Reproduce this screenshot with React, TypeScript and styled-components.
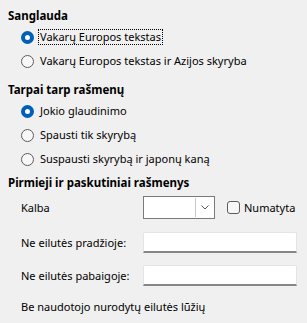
import styled, { createGlobalStyle } from 'styled-components';

const GlobalStyle = createGlobalStyle`
  html, body {
    margin: 0;
    padding: 0;
    background: #f0f0f0;
  }
  body {
    font-family: 'Noto Sans', 'Open Sans', sans-serif;
    font-size: 11px;
    color: #000;
  }
`;

const Page = styled.div`
  width: 307px;
  height: 323px;
  box-sizing: border-box;
  padding: 6px 9px 0 8px;
  display: flex;
  flex-direction: column;
`;

const Section = styled.section<{ $gap?: number }>`
  display: flex;
  flex-direction: column;
  margin-top: ${(p) => p.$gap ?? 0}px;
`;

const Heading = styled.div`
  font-weight: 700;
  font-size: 11.5px;
  height: 19px;
  line-height: 19px;
`;

const Options = styled.div`
  display: flex;
  flex-direction: column;
  padding-left: 13px;
`;

const OptionRow = styled.label`
  display: flex;
  align-items: center;
  gap: 4px;
  height: 24px;
`;

const RadioDot = styled.span<{ $on?: boolean }>`
  box-sizing: border-box;
  width: 13px;
  height: 13px;
  border-radius: 50%;
  flex: none;
  background: ${(p) => (p.$on ? '#ffffff' : '#f7f7f7')};
  border: ${(p) => (p.$on ? '4px solid #005fb8' : '1px solid #5c5c5c')};
`;

const OptionText = styled.span<{ $focus?: boolean }>`
  line-height: 14px;
  padding: 0 1px;
  border: 1px dotted ${(p) => (p.$focus ? '#000' : 'transparent')};
`;

const FormRow = styled.div<{ $h: number; $gap: number }>`
  display: flex;
  align-items: center;
  height: ${(p) => p.$h}px;
  margin-top: ${(p) => p.$gap}px;
  padding-left: 13px;
`;

const FieldLabel = styled.span`
  width: 122px;
  flex: none;
`;

const Combo = styled.div`
  box-sizing: border-box;
  width: 72px;
  height: 23px;
  border: 1px solid #7a7a7a;
  background: #fff;
  display: flex;
  justify-content: flex-end;
  padding: 1px;
`;

const ComboButton = styled.div`
  box-sizing: border-box;
  width: 18px;
  height: 100%;
  border-left: 1px solid #c8c8c8;
  display: flex;
  align-items: center;
  justify-content: center;
`;

const Check = styled.span`
  box-sizing: border-box;
  width: 13px;
  height: 13px;
  border: 1px solid #5c5c5c;
  border-radius: 3px;
  background: #f7f7f7;
  margin-left: 12px;
  margin-right: 4px;
`;

const TextBox = styled.div`
  box-sizing: border-box;
  width: 154px;
  height: 21px;
  background: #fff;
  border: 1px solid #e4e4e4;
  border-bottom: 2px solid #868686;
  border-radius: 2px 2px 0 0;
`;

const Note = styled.div`
  padding-left: 13px;
  margin-top: 11px;
  height: 20px;
  line-height: 20px;
`;

function Radio({ label, on, focus }: { label: string; on?: boolean; focus?: boolean }) {
  return (
    <OptionRow>
      <RadioDot $on={on} />
      <OptionText $focus={focus}>{label}</OptionText>
    </OptionRow>
  );
}

export default function App() {
  return (
    <>
      <GlobalStyle />
      <Page>
        <Section>
          <Heading>Sanglauda</Heading>
          <Options>
            <Radio label="Vakarų Europos tekstas" on focus />
            <Radio label="Vakarų Europos tekstas ir Azijos skyryba" />
          </Options>
        </Section>
        <Section $gap={7}>
          <Heading>Tarpai tarp rašmenų</Heading>
          <Options>
            <Radio label="Jokio glaudinimo" on />
            <Radio label="Spausti tik skyrybą" />
            <Radio label="Suspausti skyrybą ir japonų kaną" />
          </Options>
        </Section>
        <Section $gap={2}>
          <Heading>Pirmieji ir paskutiniai rašmenys</Heading>
          <FormRow $h={23} $gap={4}>
            <FieldLabel>Kalba</FieldLabel>
            <Combo>
              <ComboButton>
                <svg width="8" height="5" viewBox="0 0 8 5">
                  <path d="M0.5 0.5 L4 4 L7.5 0.5" fill="none" stroke="#555" strokeWidth="1" />
                </svg>
              </ComboButton>
            </Combo>
            <Check />
            <span>Numatyta</span>
          </FormRow>
          <FormRow $h={21} $gap={13}>
            <FieldLabel>Ne eilutės pradžioje:</FieldLabel>
            <TextBox />
          </FormRow>
          <FormRow $h={21} $gap={12}>
            <FieldLabel>Ne eilutės pabaigoje:</FieldLabel>
            <TextBox />
          </FormRow>
          <Note>Be naudotojo nurodytų eilutės lūžių</Note>
        </Section>
      </Page>
    </>
  );
}
